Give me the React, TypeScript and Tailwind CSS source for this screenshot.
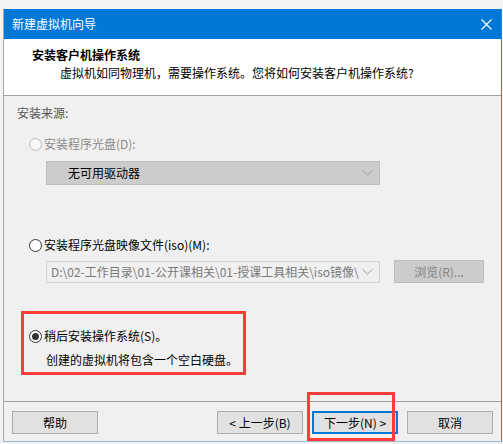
const Chevron = () => (
  <svg width="11" height="6" viewBox="0 0 11 6" fill="none" className="shrink-0">
    <path d="M0.5 0.5 L5.5 5 L10.5 0.5" stroke="#a0a0a0" strokeWidth="1" />
  </svg>
)

const Radio = ({ checked = false, disabled = false }: { checked?: boolean; disabled?: boolean }) => (
  <span
    className={
      disabled
        ? 'flex h-[13px] w-[13px] shrink-0 items-center justify-center rounded-full border border-[#bcbcbc] bg-[#f7f7f7]'
        : 'flex h-[13px] w-[13px] shrink-0 items-center justify-center rounded-full border border-[#333333] bg-white'
    }
  >
    {checked && <span className="h-[7px] w-[7px] rounded-full bg-[#333333]" />}
  </span>
)

const Btn = ({ children, primary = false }: { children: React.ReactNode; primary?: boolean }) => (
  <div
    className={
      primary
        ? 'flex h-[23px] w-[86px] items-center justify-center border-2 border-[#0078d7] bg-[#e1e1e1] text-black'
        : 'flex h-[23px] w-[86px] items-center justify-center border border-[#adadad] bg-[#e1e1e1] text-black'
    }
  >
    {children}
  </div>
)

export default function App() {
  return (
    <div className="h-[444px] w-[503px] overflow-hidden bg-[#f3f3f3] pt-[9px] pl-[3px] font-['Noto_Sans_CJK_SC',sans-serif] text-[12px] leading-[16px]">
      <div className="flex w-[499px] flex-col border-r border-b border-l border-r-[#2b88d8] border-b-[#9fb8cf] border-l-[#a9a9a9]">
        {/* title bar */}
        <div className="flex h-[30px] items-center justify-between bg-[#0078d7] pr-[9px] pl-[8px] text-white">
          <span>新建虚拟机向导</span>
          <svg width="11" height="11" viewBox="0 0 11 11">
            <path d="M0.5 0.5 L10.5 10.5 M10.5 0.5 L0.5 10.5" stroke="#fff" strokeWidth="1.2" />
          </svg>
        </div>

        {/* header */}
        <div className="h-[57px] border-b border-[#a0a0a0] bg-white pt-[8px] pl-[28px]">
          <div className="font-bold text-black">安装客户机操作系统</div>
          <div className="mt-[2px] pl-[28px] text-black">
            虚拟机如同物理机，需要操作系统。您将如何安装客户机操作系统?
          </div>
        </div>

        {/* body */}
        <div className="flex h-[306px] flex-col border-b border-[#a0a0a0] bg-[#f0f0f0] pt-[9px] pl-[13px]">
          <div className="text-[#555555]">安装来源:</div>

          <div className="mt-[15px] ml-[12px] flex items-center gap-[2px] text-[#8a8a8a]">
            <Radio disabled />
            <span>安装程序光盘(D):</span>
          </div>
          <div className="mt-[9px] ml-[29px] flex h-[24px] w-[334px] items-center justify-between border border-[#bfbfbf] bg-[#cccccc] pr-[6px] pl-[21px] text-black">
            <span>无可用驱动器</span>
            <Chevron />
          </div>

          <div className="mt-[52px] ml-[12px] flex items-center gap-[2px] text-black">
            <Radio />
            <span>安装程序光盘映像文件(iso)(M):</span>
          </div>
          <div className="mt-[7px] ml-[29px] flex items-start gap-[14px]">
            <div className="mt-[1px] flex h-[22px] w-[334px] items-center border border-[#d4d4d4] bg-[#f0f0f0] pr-[6px] pl-[4px] text-[#7a7a7a]">
              <span className="whitespace-nowrap">D:\02-工作目录\01-公开课相关\01-授课工具相关\iso镜像\</span>
              <span className="ml-auto">
                <Chevron />
              </span>
            </div>
            <div className="flex h-[23px] w-[90px] items-center justify-center border border-[#bfbfbf] bg-[#cccccc] text-[#838383]">
              浏览(R)...
            </div>
          </div>

          <div className="mt-[28px] ml-[4px] flex h-[64px] w-[225px] flex-col border-[3px] border-[#ff3b3b] pt-[14px] pl-[5px]">
            <div className="flex items-center gap-[2px] text-black">
              <Radio checked />
              <span>稍后安装操作系统(S)。</span>
            </div>
            <div className="mt-[8px] pl-[17px] text-black">创建的虚拟机将包含一个空白硬盘。</div>
          </div>
        </div>

        {/* footer */}
        <div className="relative flex h-[39px] items-start bg-[#f0f0f0] pt-[9px] pl-[8px]">
          <Btn>帮助</Btn>
          <div className="ml-[119px] flex gap-[9px]">
            <Btn>&lt; 上一步(B)</Btn>
            <div className="relative">
              <Btn primary>下一步(N) &gt;</Btn>
              <div className="absolute top-[-19px] left-[-5px] h-[49px] w-[88px] border-[3px] border-[#ff3b3b]" />
            </div>
            <Btn>取消</Btn>
          </div>
        </div>
      </div>
    </div>
  )
}
